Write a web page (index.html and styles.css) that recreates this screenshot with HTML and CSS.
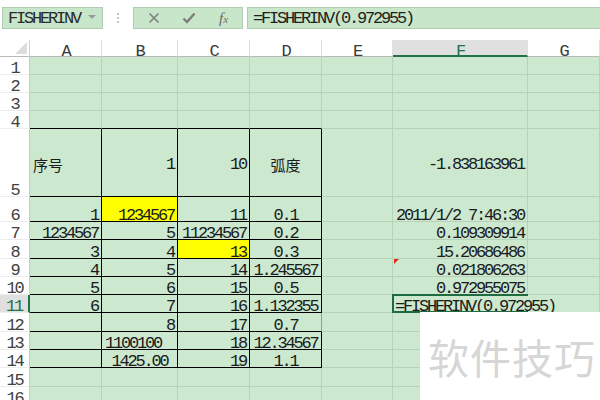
FILE: index.html
```html
<!DOCTYPE html>
<html>
<head>
<meta charset="utf-8">
<link rel="stylesheet" href="styles.css">
</head>
<body>
<div class="toolbar">
  <div class="namebox"><span>FISHERINV</span><span class="caret"></span></div>
  <div class="dots"><i></i><i></i><i></i></div>
  <div class="btnbox">
    <svg class="ico" width="12" height="12" viewBox="0 0 12 12"><path d="M1.5 1.5 L10.5 10.5 M10.5 1.5 L1.5 10.5" stroke="#7d7d7d" stroke-width="1.5" fill="none"/></svg>
    <svg class="ico" width="14" height="12" viewBox="0 0 14 12"><path d="M1.5 6.5 L5 10 L12.5 1.5" stroke="#7d7d7d" stroke-width="2.4" fill="none"/></svg>
    <span class="fx">f<small>x</small></span>
  </div>
  <div class="formula">=FISHERINV(0.972955)</div>
</div>

<div class="sheet">
  <div class="h corner"><span class="tri"></span></div>
  <div class="h">A</div><div class="h">B</div><div class="h">C</div><div class="h">D</div><div class="h">E</div><div class="h sel">F</div><div class="h">G</div>

  <div class="rh">1</div><div class="c"></div><div class="c"></div><div class="c"></div><div class="c"></div><div class="c"></div><div class="c"></div><div class="c"></div>
  <div class="rh">2</div><div class="c"></div><div class="c"></div><div class="c"></div><div class="c"></div><div class="c"></div><div class="c"></div><div class="c"></div>
  <div class="rh">3</div><div class="c"></div><div class="c"></div><div class="c"></div><div class="c"></div><div class="c"></div><div class="c"></div><div class="c"></div>
  <div class="rh">4</div><div class="c tb"></div><div class="c tb"></div><div class="c tb"></div><div class="c tb"></div><div class="c"></div><div class="c"></div><div class="c"></div>

  <div class="rh">5</div>
  <div class="c t mid l"><span class="cjk">序号</span></div>
  <div class="c t mid r">1</div>
  <div class="c t mid r">10</div>
  <div class="c t mid m"><span class="cjk">弧度</span></div>
  <div class="c mid"></div>
  <div class="c mid r">-1.838163961</div>
  <div class="c"></div>

  <div class="rh">6</div>
  <div class="c t r">1</div>
  <div class="c t r y">1234567</div>
  <div class="c t r">11</div>
  <div class="c t m">0.1</div>
  <div class="c"></div>
  <div class="c r">2011/1/2 7:46:30</div>
  <div class="c"></div>

  <div class="rh">7</div>
  <div class="c t r">1234567</div>
  <div class="c t r">5</div>
  <div class="c t r">11234567</div>
  <div class="c t m">0.2</div>
  <div class="c"></div>
  <div class="c r">0.109309914</div>
  <div class="c"></div>

  <div class="rh">8</div>
  <div class="c t r">3</div>
  <div class="c t r">4</div>
  <div class="c t r y">13</div>
  <div class="c t m">0.3</div>
  <div class="c"></div>
  <div class="c r">15.20686486</div>
  <div class="c"></div>

  <div class="rh">9</div>
  <div class="c t r">4</div>
  <div class="c t r">5</div>
  <div class="c t r">14</div>
  <div class="c t m">1.245567</div>
  <div class="c"></div>
  <div class="c r note">0.021806263<span class="flag"></span></div>
  <div class="c"></div>

  <div class="rh">10</div>
  <div class="c t r">5</div>
  <div class="c t r">6</div>
  <div class="c t r">15</div>
  <div class="c t m">0.5</div>
  <div class="c"></div>
  <div class="c r">0.972955075</div>
  <div class="c"></div>

  <div class="rh rsel">11</div>
  <div class="c t r">6</div>
  <div class="c t r">7</div>
  <div class="c t r">16</div>
  <div class="c t m">1.132355</div>
  <div class="c"></div>
  <div class="c l active">=FISHERINV(0.972955)<span class="cursor"></span></div>
  <div class="c"></div>

  <div class="rh">12</div>
  <div class="c t"></div>
  <div class="c t r">8</div>
  <div class="c t r">17</div>
  <div class="c t m warn">0.7</div>
  <div class="c"></div>
  <div class="c"></div>
  <div class="c"></div>

  <div class="rh">13</div>
  <div class="c t"></div>
  <div class="c t l">1100100</div>
  <div class="c t r">18</div>
  <div class="c t m">12.34567</div>
  <div class="c"></div>
  <div class="c"></div>
  <div class="c"></div>

  <div class="rh">14</div>
  <div class="c t"></div>
  <div class="c t m">1425.00</div>
  <div class="c t r">19</div>
  <div class="c t m">1.1</div>
  <div class="c"></div>
  <div class="c"></div>
  <div class="c"></div>

  <div class="rh">15</div><div class="c"></div><div class="c"></div><div class="c"></div><div class="c"></div><div class="c"></div><div class="c"></div><div class="c"></div>
  <div class="rh">16</div><div class="c"></div><div class="c"></div><div class="c"></div><div class="c"></div><div class="c"></div><div class="c"></div><div class="c"></div>
</div>

<div class="watermark">软件技巧</div>
</body>
</html>
```

FILE: styles.css
```css
* { box-sizing: border-box; }
html, body { margin: 0; padding: 0; }
body {
  width: 600px;
  height: 400px;
  overflow: hidden;
  position: relative;
  background: #ffffff;
  font-family: "Liberation Mono", "DejaVu Sans Mono", monospace;
  font-size: 17px;
  letter-spacing: -2.2px;
  color: #1b1b1b;
}

/* toolbar */
.toolbar {
  height: 40px;
  display: flex;
  align-items: flex-start;
  padding: 7px 0 0 2px;
}
.namebox {
  width: 101px;
  height: 22px;
  background: #c8e6ca;
  border: 1px solid #b2ccb4;
  display: flex;
  align-items: center;
  justify-content: space-between;
  padding: 1px 6px 0 5px;
  color: #2a2a2a;
}
.caret {
  width: 0;
  height: 0;
  border-left: 4px solid transparent;
  border-right: 4px solid transparent;
  border-top: 4px solid #9a9a9a;
  margin-top: -4px;
}
.dots {
  width: 30px;
  height: 22px;
  display: flex;
  flex-direction: column;
  align-items: center;
  justify-content: center;
  gap: 2px;
}
.dots i {
  width: 2px;
  height: 2px;
  background: #c4c4c4;
}
.btnbox {
  width: 110px;
  height: 22px;
  background: #c8e6ca;
  border: 1px solid #b2ccb4;
  display: flex;
  align-items: center;
  padding: 0 0 0 14px;
  gap: 22px;
}
.fx {
  font-family: "Liberation Serif", serif;
  font-style: italic;
  font-size: 15px;
  letter-spacing: 0;
  color: #6a6a6a;
  margin-left: 1px;
}
.fx small { font-size: 11px; }
.formula {
  flex: 1;
  margin-left: 4px;
  margin-right: -3px;
  height: 22px;
  background: #c8e6ca;
  border: 1px solid #b2ccb4;
  display: flex;
  align-items: center;
  padding: 1px 0 0 5px;
  color: #1f1f1f;
}

/* sheet */
.sheet {
  display: grid;
  grid-template-columns: 30px 72px 76px 72px 72px 71px 135px 72px;
  grid-template-rows: 17px 18px 18px 18px 18px 68px 25px 18px 19px 18px 18px 18px 19px 18px 18px 19px 18px;
}
.h {
  background: #ffffff;
  border-right: 1px solid #e0e0e0;
  border-bottom: 1px solid #b9b9b9;
  display: flex;
  align-items: flex-end;
  justify-content: center;
  color: #3a3a3a;
  line-height: 8px;
}
.corner {
  border-right: 1px solid #d0d0d0;
  position: relative;
}
.tri {
  position: absolute;
  right: 2px;
  bottom: 2px;
  width: 0;
  height: 0;
  border-left: 12px solid transparent;
  border-bottom: 12px solid #dcdcdc;
}
.h.sel {
  background: #e0e0e0;
  border-bottom: 2px solid #217346;
  color: #217346;
  line-height: 6px;
}
.rh {
  background: #ffffff;
  border-right: 1px solid #c9c9c9;
  border-bottom: 1px solid #ececec;
  display: flex;
  align-items: flex-end;
  justify-content: center;
  color: #404040;
  line-height: 10px;
}
.rh.rsel {
  background: #e0e0e0;
  border-right: 2px solid #217346;
  color: #217346;
}
.c {
  background: #cce8cf;
  border-right: 1px solid #b6d2b9;
  border-bottom: 1px solid #b6d2b9;
  display: flex;
  align-items: flex-end;
  padding: 0 3px 0 3px;
  white-space: nowrap;
  line-height: 10px;
}
.c.r { justify-content: flex-end; }
.c.m { justify-content: center; }
.c.l { justify-content: flex-start; }
.c.mid { align-items: center; padding-top: 5px; }
.c.t { border-right-color: #000; border-bottom-color: #000; }
.c.tb { border-bottom-color: #000; }
.c.y { background: #ffff00; }
.c.warn { border-right-color: #f07b52; }
.cjk {
  font-family: "Noto Sans CJK SC", sans-serif;
  font-size: 15px;
  letter-spacing: 0;
  color: #1b1b1b;
}
.note { position: relative; }
.flag {
  position: absolute;
  left: 1px;
  top: 0;
  width: 0;
  height: 0;
  border-top: 5px solid #e0281e;
  border-right: 5px solid transparent;
}
.active {
  position: relative;
  z-index: 1;
  overflow: visible;
  padding-left: 2px;
  border-right-color: transparent;
}
.active::after {
  content: "";
  position: absolute;
  left: -1px;
  top: -1px;
  right: -1px;
  bottom: -1px;
  border: 2px solid #1e6b41;
  border-right: 0;
}
.cursor {
  display: inline-block;
  width: 1px;
  height: 15px;
  background: #000;
  margin-left: 4px;
  margin-bottom: -2px;
}
.watermark {
  position: absolute;
  left: 420px;
  top: 312px;
  width: 180px;
  height: 88px;
  background: #ffffff;
  z-index: 2;
  display: flex;
  align-items: center;
  justify-content: center;
  padding-left: 4px;
  font-family: "Noto Sans CJK SC", sans-serif;
  font-size: 41px;
  letter-spacing: 1px;
  color: #d6d6d6;
}
```
